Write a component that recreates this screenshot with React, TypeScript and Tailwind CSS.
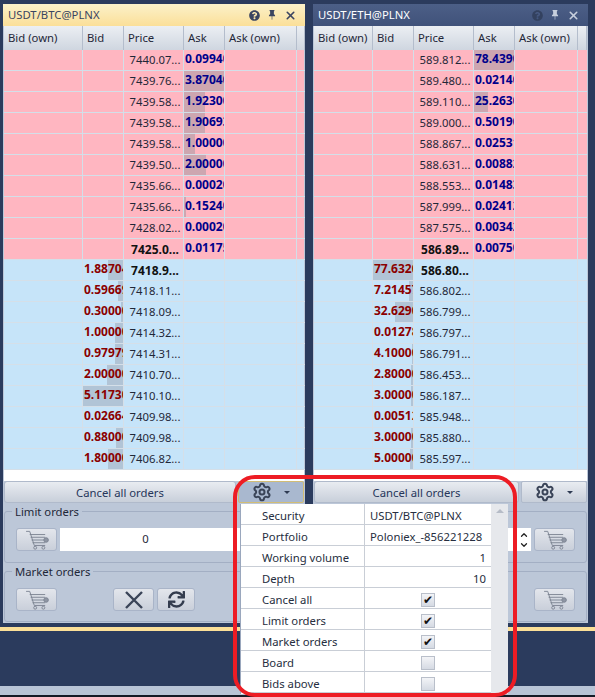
import { Settings, X, ChevronUp, ChevronDown } from "lucide-react";
import { FaQuestionCircle, FaSync } from "react-icons/fa";
import { BsPinFill } from "react-icons/bs";

type Row = { price: string; vol: string; bar: number; bold?: boolean };
type Book = {
  title: string;
  active: boolean;
  cols: string;
  asks: Row[];
  bids: Row[];
};

const BOOKS: Book[] = [
  {
    title: "USDT/BTC@PLNX",
    active: true,
    cols: "grid-cols-[79px_41px_60px_41px_72px_8px]",
    asks: [
      { price: "7440.07...", vol: "0.09940", bar: 0 },
      { price: "7439.76...", vol: "3.87040", bar: 41 },
      { price: "7439.58...", vol: "1.92300", bar: 21 },
      { price: "7439.58...", vol: "1.90693", bar: 21 },
      { price: "7439.58...", vol: "1.00000", bar: 11 },
      { price: "7439.50...", vol: "2.00000", bar: 22 },
      { price: "7435.66...", vol: "0.00020", bar: 0 },
      { price: "7435.66...", vol: "0.15240", bar: 2 },
      { price: "7428.02...", vol: "0.00020", bar: 0 },
      { price: "7425.0...", vol: "0.01175", bar: 0, bold: true },
    ],
    bids: [
      { price: "7418.9...", vol: "1.88704", bar: 15, bold: true },
      { price: "7418.11...", vol: "0.59669", bar: 5 },
      { price: "7418.09...", vol: "0.30000", bar: 2 },
      { price: "7414.32...", vol: "1.00000", bar: 8 },
      { price: "7414.31...", vol: "0.97979", bar: 8 },
      { price: "7410.70...", vol: "2.00000", bar: 16 },
      { price: "7410.10...", vol: "5.11730", bar: 41 },
      { price: "7409.98...", vol: "0.02664", bar: 0 },
      { price: "7409.98...", vol: "0.88000", bar: 7 },
      { price: "7406.82...", vol: "1.80000", bar: 15 },
    ],
  },
  {
    title: "USDT/ETH@PLNX",
    active: false,
    cols: "grid-cols-[59px_41px_60px_41px_63px_9px]",
    asks: [
      { price: "589.812...", vol: "78.4390", bar: 41 },
      { price: "589.480...", vol: "0.02140", bar: 0 },
      { price: "589.110...", vol: "25.2630", bar: 14 },
      { price: "589.000...", vol: "0.50190", bar: 0 },
      { price: "588.867...", vol: "0.02531", bar: 0 },
      { price: "588.631...", vol: "0.00882", bar: 0 },
      { price: "588.553...", vol: "0.01483", bar: 0 },
      { price: "587.999...", vol: "0.02412", bar: 0 },
      { price: "587.575...", vol: "0.00342", bar: 0 },
      { price: "586.89...", vol: "0.00750", bar: 0, bold: true },
    ],
    bids: [
      { price: "586.80...", vol: "77.6320", bar: 41, bold: true },
      { price: "586.802...", vol: "7.21457", bar: 4 },
      { price: "586.799...", vol: "32.6290", bar: 18 },
      { price: "586.797...", vol: "0.01278", bar: 0 },
      { price: "586.791...", vol: "4.10000", bar: 1 },
      { price: "586.453...", vol: "2.80000", bar: 2 },
      { price: "586.187...", vol: "3.00000", bar: 2 },
      { price: "585.948...", vol: "0.00512", bar: 0 },
      { price: "585.880...", vol: "3.00000", bar: 2 },
      { price: "585.597...", vol: "5.00000", bar: 3 },
    ],
  },
];

const HEADERS = ["Bid (own)", "Bid", "Price", "Ask", "Ask (own)", ""];

const SETTINGS: { label: string; value?: string; right?: boolean; checked?: boolean }[] = [
  { label: "Security", value: "USDT/BTC@PLNX" },
  { label: "Portfolio", value: "Poloniex_-856221228" },
  { label: "Working volume", value: "1", right: true },
  { label: "Depth", value: "10", right: true },
  { label: "Cancel all", checked: true },
  { label: "Limit orders", checked: true },
  { label: "Market orders", checked: true },
  { label: "Board", checked: false },
  { label: "Bids above", checked: false },
];

function CartIcon() {
  return (
    <svg viewBox="0 0 30 22" className="h-[20px] w-[28px]" fill="none" stroke="#7b8291" strokeWidth="1">
      <path d="M3 1.5h4l5 15.5h12" />
      <path d="M7 5h17M8 8h16M9 11h15M10 14h14" />
      <circle cx="13" cy="19.5" r="1.6" />
      <circle cx="22" cy="19.5" r="1.6" />
      <circle cx="25" cy="11" r="2.5" fill="#8f96a4" />
    </svg>
  );
}

function ToolButton({ className, children }: { className: string; children: React.ReactNode }) {
  return (
    <button className={`flex h-[23px] shrink-0 items-center justify-center rounded-[3px] border border-[#a9b4c8] bg-gradient-to-b from-[#e3e6ec] to-[#c9cfda] ${className}`}>
      {children}
    </button>
  );
}

function BookRow({ row, side, cols }: { row: Row; side: "ask" | "bid"; cols: string }) {
  const isAsk = side === "ask";
  const line = isAsk ? "border-[#d3dfe9]" : "border-[#d5dfe8]";
  const cell = `relative overflow-hidden border-r border-b ${line}`;
  const volume = (
    <div className={cell}>
      <div
        className={`absolute top-0 bottom-0 ${isAsk ? "left-0 bg-[#cda6b0]" : "right-0 bg-[#b1c4d6]"}`}
        style={{ width: row.bar }}
      />
      <span className={`relative block pl-[1px] text-[12px] font-bold whitespace-nowrap leading-[18px] ${isAsk ? "text-[#00008b]" : "text-[#8b0000]"}`}>
        {row.vol}
      </span>
    </div>
  );
  return (
    <div className={`grid h-[21px] ${cols} ${isAsk ? "bg-[#ffb6c1]" : "bg-[#c6e4f9]"}`}>
      <div className={cell} />
      {isAsk ? <div className={cell} /> : volume}
      <div className={`${cell} flex items-center justify-center pt-[1px] pl-[3px] whitespace-nowrap ${row.bold ? "text-[12px] font-bold text-[#111]" : "text-[#1f2738]"}`}>
        {row.price}
      </div>
      {isAsk ? volume : <div className={cell} />}
      <div className={cell} />
      <div className={`border-b ${line}`} />
    </div>
  );
}

function BookPanel({ book, width }: { book: Book; width: string }) {
  return (
    <div className={`flex h-[619px] shrink-0 flex-col ${width}`}>
      <div
        className={`flex h-[22px] items-center justify-between pr-[8px] pl-[5px] ${
          book.active ? "bg-gradient-to-b from-[#fbf1c9] to-[#fbdf98] text-[#3a4560]" : "bg-gradient-to-b from-[#4c5f87] to-[#40527a] text-white"
        }`}
      >
        <span className="pt-[1px]">{book.title}</span>
        <div className={`flex items-center gap-[7px] ${book.active ? "text-[#3b4560]" : "text-[#c7cfdd]"}`}>
          <FaQuestionCircle size={11} className={book.active ? "" : "text-[#33415f]"} />
          <BsPinFill size={10} />
          <X size={13} strokeWidth={3} />
        </div>
      </div>
      <div className="flex min-h-0 flex-1 flex-col border-x border-[#bcc7d8]">
        <div className={`grid h-[24px] ${book.cols} bg-gradient-to-b from-[#eceff3] to-[#cfd6e0]`}>
          {HEADERS.map((h, i) => (
            <div key={i} className="flex items-center border-r border-[#b4bdcc] pt-[1px] pl-[4px] whitespace-nowrap text-[#1f2738]">
              {h}
            </div>
          ))}
        </div>
        {book.asks.map((r) => (
          <BookRow key={r.price + r.vol} row={r} side="ask" cols={book.cols} />
        ))}
        {book.bids.map((r) => (
          <BookRow key={r.price + r.vol} row={r} side="bid" cols={book.cols} />
        ))}
        <div className="h-[11px] bg-white" />
        <div className="flex h-[22px] gap-[2px] bg-[#bcc7d8]">
          <button className="flex-1 rounded-[3px] border border-[#b0bacb] bg-gradient-to-b from-[#e9ecf1] to-[#c8cfda] pt-[2px] text-[#26365a]">
            Cancel all orders
          </button>
          <button
            className={`flex w-[66px] items-center justify-center gap-[12px] rounded-[2px] border ${
              book.active ? "border-[#d2bd75] bg-[#a9b8cf]" : "border-[#b0bacb] bg-gradient-to-b from-[#e9ecf1] to-[#c8cfda]"
            }`}
          >
            <Settings size={20} strokeWidth={2.4} className="text-[#3a4458]" />
            <span className="border-x-[3px] border-t-[3px] border-x-transparent border-t-[#2e3a52]" />
          </button>
        </div>
        <div className="flex-1 bg-[#bcc7d8] text-[#1f2738]">
          <fieldset className={`h-[60px] rounded-[3px] border border-[#a3afc4] pl-[11px] ${book.active ? "pr-[4px]" : "pr-[11px]"}`}>
            <legend className="-ml-[4px] px-[3px] pt-[1px] leading-[16px]">Limit orders</legend>
            <div className="flex gap-[3px] pt-[8px]">
              <ToolButton className="w-[41px]">
                <CartIcon />
              </ToolButton>
              <div className="flex h-[23px] flex-1 items-center bg-white">
                <span className={`flex-1 text-center ${book.active ? "pr-[10px]" : ""}`}>0</span>
                <span className="flex w-[14px] flex-col items-center text-[#222]">
                  <ChevronUp size={10} strokeWidth={3} />
                  <ChevronDown size={10} strokeWidth={3} />
                </span>
              </div>
              <ToolButton className="w-[41px]">
                <CartIcon />
              </ToolButton>
            </div>
          </fieldset>
          <fieldset className="h-[59px] rounded-[3px] border border-[#a3afc4] px-[11px]">
            <legend className="-ml-[4px] px-[3px] pt-[1px] leading-[16px]">Market orders</legend>
            <div className="flex items-center justify-between pt-[8px]">
              <ToolButton className="w-[41px]">
                <CartIcon />
              </ToolButton>
              <div className="flex gap-[3px]">
                <ToolButton className="w-[41px]">
                  <svg viewBox="0 0 22 20" className="h-[20px] w-[22px]" fill="none" stroke="#3a4458" strokeWidth="2.4">
                    <path d="M3 2l16 16M19 2L3 18" />
                  </svg>
                </ToolButton>
                <ToolButton className="w-[38px]">
                  <FaSync size={17} className="text-[#333c4e]" />
                </ToolButton>
              </div>
              <ToolButton className="w-[41px]">
                <CartIcon />
              </ToolButton>
            </div>
          </fieldset>
        </div>
      </div>
    </div>
  );
}

function SettingsPopup() {
  return (
    <div className="absolute top-[504px] left-[240px] flex h-[190px] w-[268px] overflow-hidden border-l border-[#9aa7bd] bg-white text-[#262e40]">
      <div className="flex-1">
        {SETTINGS.map((s) => (
          <div key={s.label} className="grid h-[21px] grid-cols-[124px_126px] border-b border-[#c9ced6]">
            <div className="border-r border-[#c9ced6] pl-[21px] leading-[23px] whitespace-nowrap">{s.label}</div>
            {s.checked === undefined ? (
              <div className={`px-[5px] leading-[23px] whitespace-nowrap ${s.right ? "text-right" : ""}`}>{s.value}</div>
            ) : (
              <div className="flex items-center justify-center">
                <span className="flex h-[14px] w-[14px] items-center justify-center border border-[#b9bfca] bg-gradient-to-b from-[#f3f4f7] to-[#d5dae3] text-[12px] leading-none text-[#111]">
                  {s.checked ? "✔" : ""}
                </span>
              </div>
            )}
          </div>
        ))}
      </div>
      <div className="flex w-[17px] justify-center bg-[#e6e8ec] pt-[5px]">
        <span className="h-0 w-0 border-x-[4px] border-b-[4px] border-x-transparent border-b-[#b6bcc7]" />
      </div>
    </div>
  );
}

export default function App() {
  return (
    <div className="relative flex h-[697px] w-[595px] flex-col overflow-hidden bg-[#2b3b5d] font-['Noto_Sans','Open_Sans',sans-serif] text-[11.3px]">
      <div className="flex gap-[8px] pt-[4px] pl-[3px]">
        <BookPanel book={BOOKS[0]} width="w-[302px]" />
        <BookPanel book={BOOKS[1]} width="w-[275px]" />
      </div>
      <div className="mt-[4px] h-[4px] bg-[#fbdf98]" />
      <div className="h-[55px]" />
      <div className="h-[9px] bg-[#b8c4d6]" />
      <div className="h-[2px] bg-[#141a26]" />
      <SettingsPopup />
      <div className="pointer-events-none absolute top-[475px] left-[233px] h-[222px] w-[284px] rounded-[22px] border-[4px] border-[#ed1c24]" />
    </div>
  );
}
